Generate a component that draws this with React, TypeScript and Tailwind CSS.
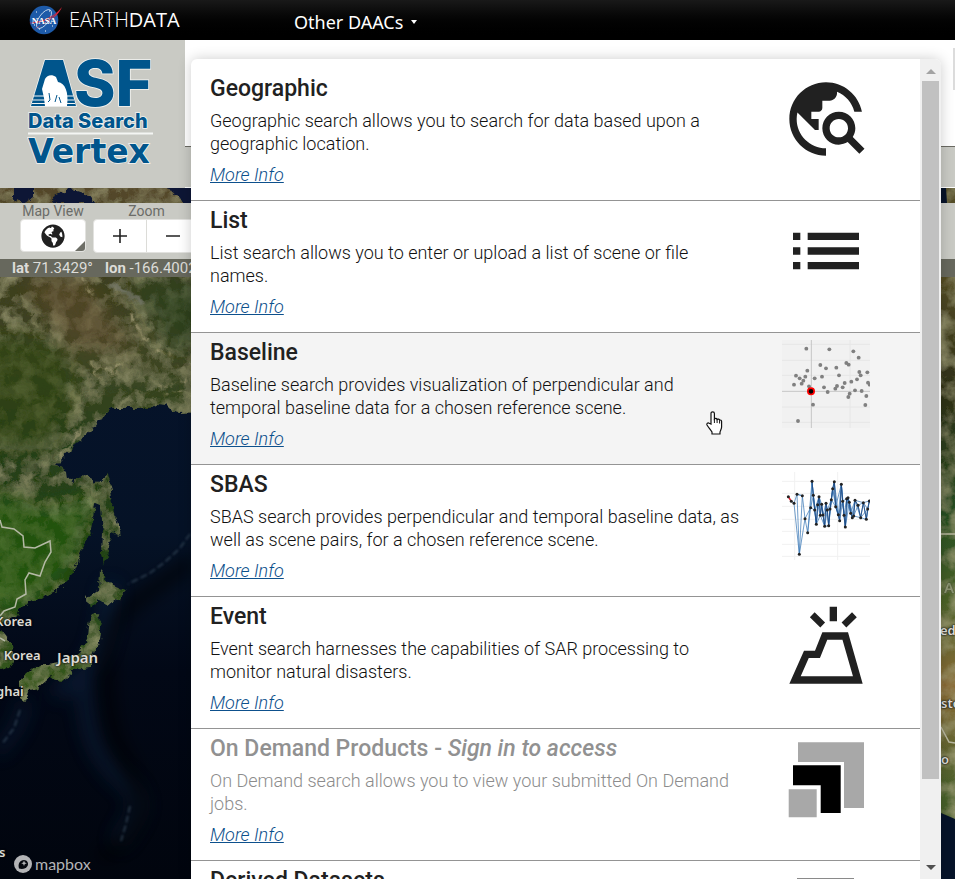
import React from "react";
import { FaGlobeAmericas } from "react-icons/fa";

const points: [number, number][] = [
  [109, 56], [178, 58], [250, 64], [266, 83], [229, 99], [236, 104], [151, 105], [168, 115], [199, 113], [112, 122],
  [268, 126], [292, 127], [272, 136], [207, 136], [156, 140], [78, 137], [106, 140], [89, 145], [134, 145], [100, 152],
  [95, 161], [72, 164], [117, 169], [162, 172], [201, 168], [196, 176], [218, 172], [224, 159], [244, 155], [261, 148],
  [294, 158], [299, 164], [173, 186], [255, 181], [275, 183], [239, 191], [235, 201], [289, 198], [286, 225], [129, 224], [84, 273],
];

const pairs: [number, number][] = [
  [64, 109], [72, 115], [81, 88], [97, 92], [105, 161], [113, 203], [122, 128], [126, 49], [130, 91], [134, 135],
  [139, 178], [143, 119], [147, 95], [151, 151], [155, 118], [159, 150], [164, 184], [168, 115], [172, 135], [176, 182],
  [180, 132], [184, 104], [188, 71], [193, 50], [197, 125], [205, 149], [209, 167], [214, 58], [218, 109], [222, 151],
  [226, 186], [230, 101], [234, 98], [238, 112], [242, 145], [247, 158], [251, 153], [255, 106], [264, 121], [272, 158],
  [280, 113], [289, 163], [293, 132], [298, 108],
];

const line = (step: number, start: number) =>
  pairs.filter((_, i) => i >= start && (i - start) % step === 0).map((p) => p.join(",")).join(" ");

function Glyph({ children, box = "0 0.27 24 24" }: { children: React.ReactNode; box?: string }) {
  return (
    <svg viewBox={box} className="h-[88px] w-[88px] shrink-0 fill-[#212121]" aria-hidden="true">
      {children}
    </svg>
  );
}

const GeographicIcon = () => (
  <Glyph>
    <path d="M19.3,16.9c0.4-0.7,0.7-1.5,0.7-2.4c0-2.5-2-4.5-4.5-4.5S11,12,11,14.5s2,4.5,4.5,4.5c0.9,0,1.7-0.3,2.4-0.7l3.2,3.2l1.4-1.4L19.3,16.9z M15.5,17c-1.4,0-2.5-1.1-2.5-2.5s1.1-2.5,2.5-2.5s2.5,1.1,2.5,2.5S16.9,17,15.5,17z M12,20v2C6.48,22,2,17.52,2,12C2,6.48,6.48,2,12,2c4.84,0,8.87,3.44,9.8,8h-2.07c-0.64-2.46-2.4-4.47-4.73-5.41V5c0,1.1-0.9,2-2,2h-2v2c0,0.55-0.45,1-1,1H8v2h2v3H9l-4.79-4.79C4.08,10.79,4,11.38,4,12C4,16.41,7.59,20,12,20z" />
  </Glyph>
);

const ListIcon = () => (
  <Glyph>
    <path d="M3 13h2v-2H3v2zm0 4h2v-2H3v2zm0-8h2V7H3v2zm4 4h14v-2H7v2zm0 4h14v-2H7v2zM7 7v2h14V7H7z" />
  </Glyph>
);

const BaselineIcon = () => (
  <Glyph box="36 30 264 264">
    <rect x="36" y="30" width="264" height="264" fill="#f1f1f1" />
    <path d="M36 43H300M36 91H300M36 136H300M36 231H300M36 277H300M240 30V294" stroke="#e6e6e6" strokeWidth="3" />
    <path d="M36 184H300M124 30V294" stroke="#c6c6c6" strokeWidth="3" />
    {points.map(([x, y]) => (
      <circle key={`${x}-${y}`} cx={x} cy={y} r="5.8" fill="#808080" />
    ))}
    <circle cx="123" cy="184" r="9.5" fill="#000" stroke="#f00" strokeWidth="5" />
  </Glyph>
);

const SbasIcon = () => (
  <Glyph box="36 21 264 264">
    <path d="M36 49H300M36 85H300M36 124H300M36 163H300M36 199H300M36 238H300M36 274H300M74 21V285M203 21V285" stroke="#f1f1f1" strokeWidth="3" />
    <g fill="none" stroke="#3b78b6" strokeWidth="2.2">
      <polyline points={line(1, 0)} />
      <polyline points={line(2, 4)} />
      <polyline points={line(2, 5)} />
      <polyline points={line(3, 6)} />
      <polyline points={line(3, 7)} />
      <path d="M72 115L88 268L97 92M81 88L88 268L105 161M81 88L97 92" />
    </g>
    <g fill="none" stroke="#1a4680" strokeWidth="2.5">
      <polyline points={line(1, 7)} />
    </g>
    <path d="M55 95L64 109" stroke="#e02030" strokeWidth="5" />
    {[...pairs, [55, 95], [88, 268]].map(([x, y]) => (
      <circle key={`${x}-${y}`} cx={x} cy={y} r="4.5" fill="#222" />
    ))}
  </Glyph>
);

const EventIcon = () => (
  <Glyph>
    <path fillRule="evenodd" d="M18 8h-7l-2 5H6L2 22h20zM5.1 20l2.2-5h3.05l2-5h4.14l2.86 10z" />
    <path d="M13 1h2v4h-2zM8.9 2.5L7.6 3.9l2.85 2.75 1.3-1.35zM19.1 2.5l1.3 1.4-2.85 2.75-1.3-1.35z" />
  </Glyph>
);

const OnDemandIcon = () => (
  <Glyph box="0 0 88 88">
    <path fill="#a8a8a8" d="M16 6.3H82V72H62V26H16zM6.7 53.3h28v28h-28z" />
    <path fill="#000" d="M11 29.3H58.7V77H38.7V49.3H11z" />
  </Glyph>
);

const DerivedIcon = () => (
  <Glyph box="0 0 88 88">
    <path fill="#8a8a8a" d="M15 10h57v68H15z" />
  </Glyph>
);

type Item = { title: string; note?: string; text: string; icon: React.ReactNode; state?: "hover" | "disabled" };

const items: Item[] = [
  { title: "Geographic", text: "Geographic search allows you to search for data based upon a geographic location.", icon: <GeographicIcon /> },
  { title: "List", text: "List search allows you to enter or upload a list of scene or file names.", icon: <ListIcon /> },
  { title: "Baseline", text: "Baseline search provides visualization of perpendicular and temporal baseline data for a chosen reference scene.", icon: <BaselineIcon />, state: "hover" },
  { title: "SBAS", text: "SBAS search provides perpendicular and temporal baseline data, as well as scene pairs, for a chosen reference scene.", icon: <SbasIcon /> },
  { title: "Event", text: "Event search harnesses the capabilities of SAR processing to monitor natural disasters.", icon: <EventIcon /> },
  { title: "On Demand Products - ", note: "Sign in to access", text: "On Demand search allows you to view your submitted On Demand jobs.", icon: <OnDemandIcon />, state: "disabled" },
  { title: "Derived Datasets", text: "", icon: <DerivedIcon /> },
];

function MenuRow({ item }: { item: Item }) {
  const off = item.state === "disabled";
  return (
    <li className={`flex h-[132px] shrink-0 justify-between border-b border-[#949494] pl-[19px] pr-[50px] ${item.state === "hover" ? "bg-[#f4f4f4]" : "bg-white"}`}>
      <div className="w-[534px] pt-2">
        <h3 className={`text-[23px] font-medium leading-6 ${off ? "text-[#919191]" : "text-[#212121]"}`}>
          {item.title}
          {item.note && <em>{item.note}</em>}
        </h3>
        <p className={`mt-2 text-[18px] font-light leading-[23px] ${off ? "text-[#8c8c8c]" : "text-[#111111]"}`}>{item.text}</p>
        <a href="#info" className="mt-2 inline-block text-[18px] font-light italic leading-6 text-[#0d508c] underline">More Info</a>
      </div>
      <div className="pt-[7px]">{item.icon}</div>
    </li>
  );
}

function Terrain() {
  return (
    <svg viewBox="0 188 955 691" preserveAspectRatio="xMinYMin slice" className="absolute inset-0 h-full w-full" aria-hidden="true">
      <defs>
        <linearGradient id="sea" x1="0" y1="0" x2="0" y2="1">
          <stop offset="0" stopColor="#06142e" />
          <stop offset="0.5" stopColor="#051226" />
          <stop offset="0.7" stopColor="#020816" />
          <stop offset="1" stopColor="#01050e" />
        </linearGradient>
        <linearGradient id="land" x1="0" y1="188" x2="0" y2="700" gradientUnits="userSpaceOnUse">
          <stop offset="0" stopColor="#54472a" />
          <stop offset="0.2" stopColor="#3c401f" />
          <stop offset="0.35" stopColor="#3c4522" />
          <stop offset="0.5" stopColor="#26401a" />
          <stop offset="0.75" stopColor="#234418" />
          <stop offset="1" stopColor="#38591f" />
        </linearGradient>
        <linearGradient id="east" x1="0" y1="188" x2="0" y2="879" gradientUnits="userSpaceOnUse">
          <stop offset="0.12" stopColor="#554d25" />
          <stop offset="0.3" stopColor="#2e3018" />
          <stop offset="0.48" stopColor="#275023" />
          <stop offset="0.6" stopColor="#4c6228" />
          <stop offset="0.72" stopColor="#8a6b35" />
          <stop offset="0.88" stopColor="#46602b" />
        </linearGradient>
        <filter id="blur" x="-20%" y="-20%" width="140%" height="140%"><feGaussianBlur stdDeviation="9" /></filter>
        <filter id="soft"><feGaussianBlur stdDeviation="1" /></filter>
        <filter id="ragged" x="-20" y="180" width="230" height="540" filterUnits="userSpaceOnUse">
          <feTurbulence type="fractalNoise" baseFrequency="0.12" numOctaves="3" seed="9" result="n" />
          <feDisplacementMap in="SourceGraphic" in2="n" scale="9" xChannelSelector="R" yChannelSelector="G" result="d" />
          <feGaussianBlur in="d" stdDeviation="0.6" />
        </filter>
        <filter id="rough" x="0" y="0" width="100%" height="100%">
          <feTurbulence type="fractalNoise" baseFrequency="0.06" numOctaves="5" seed="4" result="n" />
          <feColorMatrix in="n" type="matrix" values="0 0 0 0 0.42  0 0 0 0 0.41  0 0 0 0 0.22  0.9 0.7 0 0 -0.66" result="t" />
          <feComposite in="t" in2="SourceGraphic" operator="in" result="c" />
          <feMerge><feMergeNode in="SourceGraphic" /><feMergeNode in="c" /></feMerge>
        </filter>
        <clipPath id="coast">
          <path d="M-20 170H210V412L180 413L172 411L166 405L157 404L150 408L133 408L110 408L100 419L88 435L72 448L57 464L66 472L67 479L73 482L82 475L92 478L96 484L108 473L111 490L115 515L121 536L113 532L108 545L109 560L105 566L102 555L103 535L101 506L96 504L92 530L82 550L70 577L55 592L35 600L20 608L16 618L-20 632ZM-20 630H0L12 645L14 660L8 668L-20 676ZM100 571L110 583L126 590L120 597L108 606L98 600L90 608L88 598L99 590ZM90 617L98 614L102 625L100 640L94 650L90 668L75 670L60 682L52 676L38 688L29 690L25 702L20 698L20 680L38 665L60 662L78 652L88 638Z" />
        </clipPath>
      </defs>
      <rect y="188" width="955" height="691" fill="url(#sea)" />
      <g fill="none" stroke="#143256" strokeLinecap="round" filter="url(#blur)" opacity="0.4">
        <path d="M84 675C86 740 98 760 125 783S130 820 120 840" strokeWidth="14" />
        <path d="M24 705C20 730 5 740 0 750" strokeWidth="10" />
        <path d="M110 590C105 650 95 670 60 690" strokeWidth="16" />
      </g>
      <path d="M191 560C160 590 125 600 113 630C102 655 105 690 112 730C120 760 150 790 138 820C132 845 110 852 100 856" fill="none" stroke="#000105" strokeWidth="9" filter="url(#blur)" />
      <path d="M190 534L180 548L165 562L150 573L128 584M130 806L126 824L121 841M20 710L14 728L2 744" fill="none" stroke="#3b4f61" strokeWidth="2" strokeDasharray="7 3" filter="url(#soft)" opacity="0.6" />
      <g filter="url(#ragged)">
        <g clipPath="url(#coast)">
          <g filter="url(#rough)"><rect x="-20" y="170" width="230" height="540" fill="url(#land)" /></g>
          <g filter="url(#blur)" opacity="0.6">
            <path d="M-20 335Q60 330 70 365T50 450H-20V350Z" fill="#2c420d" />
            <path d="M20 280L80 275L135 350L75 350Z" fill="#5b4a2a" />
            <path d="M-20 490L50 510L95 495L70 570L20 610H-20Z" fill="#28600f" />
            <path d="M130 280H210V345L170 350Z" fill="#28401b" />
          </g>
          <g fill="none" stroke="#b5ab84" filter="url(#soft)" opacity="0.7">
            <path d="M82 276L93 298M90 363L105 370L123 364M130 315L147 342M94 369L100 378M155 350L170 356M108 372L120 372" strokeWidth="3" strokeDasharray="6 2 2 3" />
            <path d="M158 388L190 380M165 394L186 390" strokeWidth="2" strokeDasharray="4 4 2 3" />
            <path d="M60 457L72 444L82 425" strokeWidth="2" />
            <path d="M110 283L145 304" stroke="#74776a" strokeWidth="5" />
          </g>
          <path d="M12 180H34V197L24 204L12 198ZM53 196Q70 186 88 194L96 204H60ZM164 180H200V208L178 199Z" fill="#071535" />
        </g>
      </g>
      <path d="M0 520L2 527L14 529L23 536L24 547L35 548L50 541L51 552L45 562L40 576L29 573L25 580L26 594L17 599L15 607L4 611L0 616M0 638L5 641" fill="none" stroke="#b4b9a5" strokeWidth="1.5" />
      <g filter="url(#rough)"><rect x="930" y="188" width="25" height="691" fill="url(#east)" /></g>
      <path d="M941 188H946L947 203L955 213V226L948 232L955 240V272L941 271ZM941 813L955 819V879H941Z" fill="#061329" />
      <path d="M941 534H955M941 727L949 742L955 743" stroke="#b8b79f" fill="none" strokeWidth="1.5" />
    </svg>
  );
}

const halo = "absolute whitespace-nowrap font-['Noto_Sans'] font-semibold text-[#dddcd6] [text-shadow:0_0_2px_#111,0_0_2px_#111]";

function MapArea() {
  return (
    <main className="relative flex-1 overflow-hidden pt-[15px]">
      <Terrain />
      <div className="relative bg-[#c9cac4] pl-5">
        <div className="flex h-14 gap-[7px]">
          <div className="w-[66px] text-center">
            <span id="view" className="block text-[14px] leading-4 text-[#6b6c68]">Map View</span>
            <button aria-labelledby="view" className="relative flex h-[33px] w-full items-center justify-center overflow-hidden rounded border border-[#e2e2df] bg-white text-[#212121]">
              <FaGlobeAmericas size={24} />
              <span className="absolute bottom-0 right-0 border-b-[10px] border-l-[10px] border-b-[#6d6e66] border-l-transparent" />
            </button>
          </div>
          <div className="w-[107px] text-center">
            <span className="block text-[14px] leading-4 text-[#6b6c68]">Zoom</span>
            <div className="flex h-[34px] divide-x divide-[#dcdcd8] overflow-hidden rounded border border-[#e2e2df] bg-white text-[#212121]">
              <button aria-label="Zoom in" className="flex flex-1 items-center justify-center"><svg width="14" height="14" stroke="currentColor" strokeWidth="1.6"><path d="M7 0V14M0 7H14" /></svg></button>
              <button aria-label="Zoom out" className="flex flex-1 items-center justify-center"><svg width="14" height="14" stroke="currentColor" strokeWidth="1.6"><path d="M0 7H14" /></svg></button>
            </div>
          </div>
        </div>
      </div>
      <div className="relative flex h-[18px] gap-3 whitespace-nowrap bg-[#67685d] pl-3 text-[15px] leading-[18px] text-[#dcdcd8]">
        <span><b>lat</b> 71.3429°</span>
        <span><b>lon</b> -166.4002°</span>
      </div>
      <span className={`${halo} -left-[5px] top-[424px] text-[13px] leading-[18px]`}>Korea</span>
      <span className={`${halo} -left-[8px] top-[458px] text-[13px] leading-[18px]`}>n Korea</span>
      <span className={`${halo} left-[57px] top-[460px] text-[15px] leading-[18px]`}>Japan</span>
      <span className={`${halo} -left-[4px] top-[494px] text-[13px] leading-[18px]`}>ghai</span>
      <span className={`${halo} -left-px top-[655px] text-[13px] leading-[18px]`}>s</span>
      <span className={`${halo} left-[944px] top-[390px] text-[15px] leading-[18px] opacity-30`}>A</span>
      <span className={`${halo} left-[940px] top-[433px] text-[13px] leading-[18px]`}>ed</span>
      <span className={`${halo} left-[941px] top-[506px] text-[13px] leading-[18px]`}>sto</span>
      <span className={`${halo} left-[941px] top-[562px] text-[13px] leading-[18px]`}>o</span>
      <a href="#mapbox" className="absolute bottom-[6px] left-[14px] flex items-center gap-[3px] font-[Lato] text-[16px] leading-[18px] text-[#b3b4b6]">
        <svg width="18" height="18" viewBox="0 0 18 18" aria-hidden="true">
          <circle cx="9" cy="9" r="9" fill="#b3b4b6" />
          <path d="M5 13.5C3.5 9 6 5 10 5c3 0 5 3 3.500 6-1.500 2.500-5 3.500-8.500 2.500z" fill="#05080f" />
          <path d="M10 5.500l.8 2 2 .8-2 .8-.8 2-.8-2-2-.8 2-.8z" fill="#b3b4b6" />
        </svg>
        mapbox
      </a>
    </main>
  );
}

function Nasa() {
  return (
    <svg width="36" height="30" viewBox="0 0 36 30" aria-hidden="true">
      <circle cx="16" cy="15" r="14.3" fill="#1d5aa8" />
      <ellipse cx="16" cy="14" rx="11" ry="5" transform="rotate(-55 16 14)" fill="none" stroke="#d4e2f2" strokeWidth=".8" />
      <path d="M8 7h1M21 6h1M24 21h1M11 24h1M17 26h1M6 20h1" stroke="#fff" />
      <path d="M1 18C10 17 25 14 34 2C27 17 15 16 4 27C12 18 22 17 29 8C20 16 10 19 1 18Z" fill="#df2638" />
      <text x="16" y="18.500" textAnchor="middle" fill="#fff" className="font-['Liberation_Serif'] text-[9px] font-bold">NASA</text>
    </svg>
  );
}

function VertexLogo() {
  return (
    <a href="#home" aria-label="ASF Data Search Vertex" className="flex w-[185px] shrink-0 justify-center bg-[#c9cac4] pl-[7px] pr-[13px]">
      <svg width="126" height="116" viewBox="26 56 126 116" className="mt-4 fill-[#00558c] font-[Inter] font-extrabold" stroke="#f4f5f3" strokeWidth="1.500" paintOrder="stroke">
        <path d="M44 60H62L75 106H30Z" />
        <path d="M33 96H46M32 100H45M31 103.500H44M65 96H72M66 100H73M66 103.500H74" strokeWidth="1.200" />
        <path d="M44 79C46 75 51 74 55 77L57 82C64 83 68 92 66 106H44L43 98L41 89Z" fill="#fff" stroke="none" />
        <path d="M48 93L49 100L47 102M56 95L54 102M58 97L60 103" fill="none" stroke="#00558c" strokeWidth="1" />
        <text x="73" y="106" className="text-[63px]">SF</text>
        <text x="27" y="128" className="text-[20px]">Data Search</text>
        <path d="M27 133.500H152" strokeWidth="2" />
        <text x="27" y="163" className="font-['DejaVu_Sans'] text-[33px] font-bold">Vertex</text>
      </svg>
    </a>
  );
}

export default function App() {
  return (
    <div className="relative flex h-screen flex-col overflow-hidden bg-white font-[Roboto,sans-serif]">
      <header className="flex h-10 shrink-0 items-center bg-linear-to-b from-[#191919] to-black pl-7 text-white">
        <a href="#earthdata" className="flex w-[266px] items-center gap-[5px] font-['Open_Sans'] text-[20px] leading-6">
          <Nasa />
          <span className="font-light">EARTH<b>DATA</b></span>
        </a>
        <button className="mt-1 flex items-center gap-2 font-['Noto_Sans'] text-[18px] leading-6">
          Other DAACs
          <span className="border-x-[3px] border-t-4 border-x-transparent border-t-white" />
        </button>
      </header>
      <div className="flex h-[148px] shrink-0">
        <VertexLogo />
        <div className="flex flex-1 flex-col">
          <div className="flex flex-1 justify-end border-b border-[#6a6a62] pt-2">
            <div className="h-[42px] w-0.5 bg-[#dcdcdc]" />
          </div>
          <div className="h-[41px] border-b border-white bg-[#c9cac4]" />
        </div>
      </div>
      <MapArea />
      <nav className="absolute bottom-0 left-[191px] right-[14px] top-[59px] flex overflow-hidden rounded-t-md bg-white shadow-[0_0_14px_rgba(0,0,0,0.2)]">
        <ul className="flex min-w-0 flex-1 flex-col overflow-hidden pt-[10px]">
          {items.map((item) => (
            <MenuRow key={item.title} item={item} />
          ))}
        </ul>
        <div className="flex w-[21px] flex-col items-center justify-between bg-[#f0f0f0] pb-[9px] pt-[10px]">
          <span className="border-x-[5px] border-b-[5px] border-x-transparent border-b-[#a3a3a3]" />
          <span className="mb-[86px] mt-[7px] w-[17px] flex-1 bg-[#c1c1c1]" />
          <span className="border-x-[5px] border-t-[5px] border-x-transparent border-t-[#505050]" />
        </div>
      </nav>
      <svg width="20" height="26" viewBox="0 0 20 26" className="absolute left-[704px] top-[410px]" aria-hidden="true">
        <path d="M7 14V3.500a1.700 1.700 0 0 1 3.400 0V9c.8-.9 2.400-.7 2.700.5.900-.8 2.200-.5 2.500.7 1-.5 2 .1 2 1.300V17c0 2-1.300 3.500-1.600 5v2H8v-2c-1-2-3.500-4.500-5-7-.8-1.500 1-2.800 2.200-1.700z" fill="#fff" stroke="#111" strokeWidth="1.200" />
        <path d="M10.400 9v4M13.100 9.500v3.500M15.600 10.500v3" stroke="#111" />
      </svg>
    </div>
  );
}
